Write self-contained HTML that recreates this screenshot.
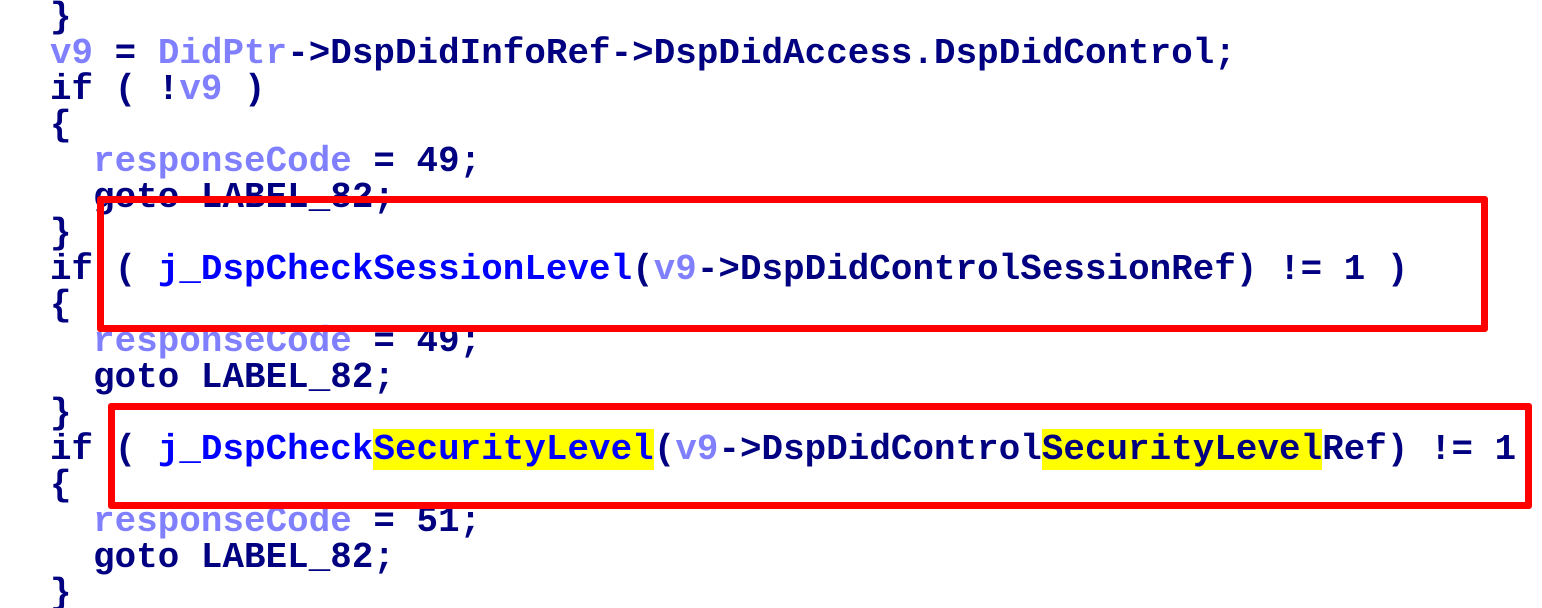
<!DOCTYPE html>
<html><head><meta charset="utf-8"><style>
html,body{margin:0;padding:0;background:#fff;width:1542px;height:608px;overflow:hidden;position:relative}
pre{position:absolute;left:50px;top:0px;margin:0;font-family:"Liberation Mono",monospace;font-size:35.8px;line-height:36px;letter-spacing:0.08px;font-weight:bold;color:#000080;white-space:pre}
.v{color:#8080ff}.f{color:#0000ff}.h{background:#ffff00}
.box{position:absolute;border:7px solid #ff0000;border-radius:3px;box-sizing:border-box}
</style></head><body>
<pre>}
<span class="v">v9</span> = <span class="v">DidPtr</span>-&gt;DspDidInfoRef-&gt;DspDidAccess.DspDidControl;
if ( !<span class="v">v9</span> )
{
  <span class="v">responseCode</span> = 49;
  goto LABEL_82;
}
if ( <span class="f">j_DspCheckSessionLevel</span>(<span class="v">v9</span>-&gt;DspDidControlSessionRef) != 1 )
{
  <span class="v">responseCode</span> = 49;
  goto LABEL_82;
}
if ( <span class="f">j_DspCheck<span class="h">SecurityLevel</span></span>(<span class="v">v9</span>-&gt;DspDidControl<span class="h">SecurityLevel</span>Ref) != 1
{
  <span class="v">responseCode</span> = 51;
  goto LABEL_82;
}</pre>
<div class="box" style="left:97px;top:196px;width:1391px;height:136px"></div>
<div class="box" style="left:108px;top:403px;width:1424px;height:106px"></div>
</body></html>
